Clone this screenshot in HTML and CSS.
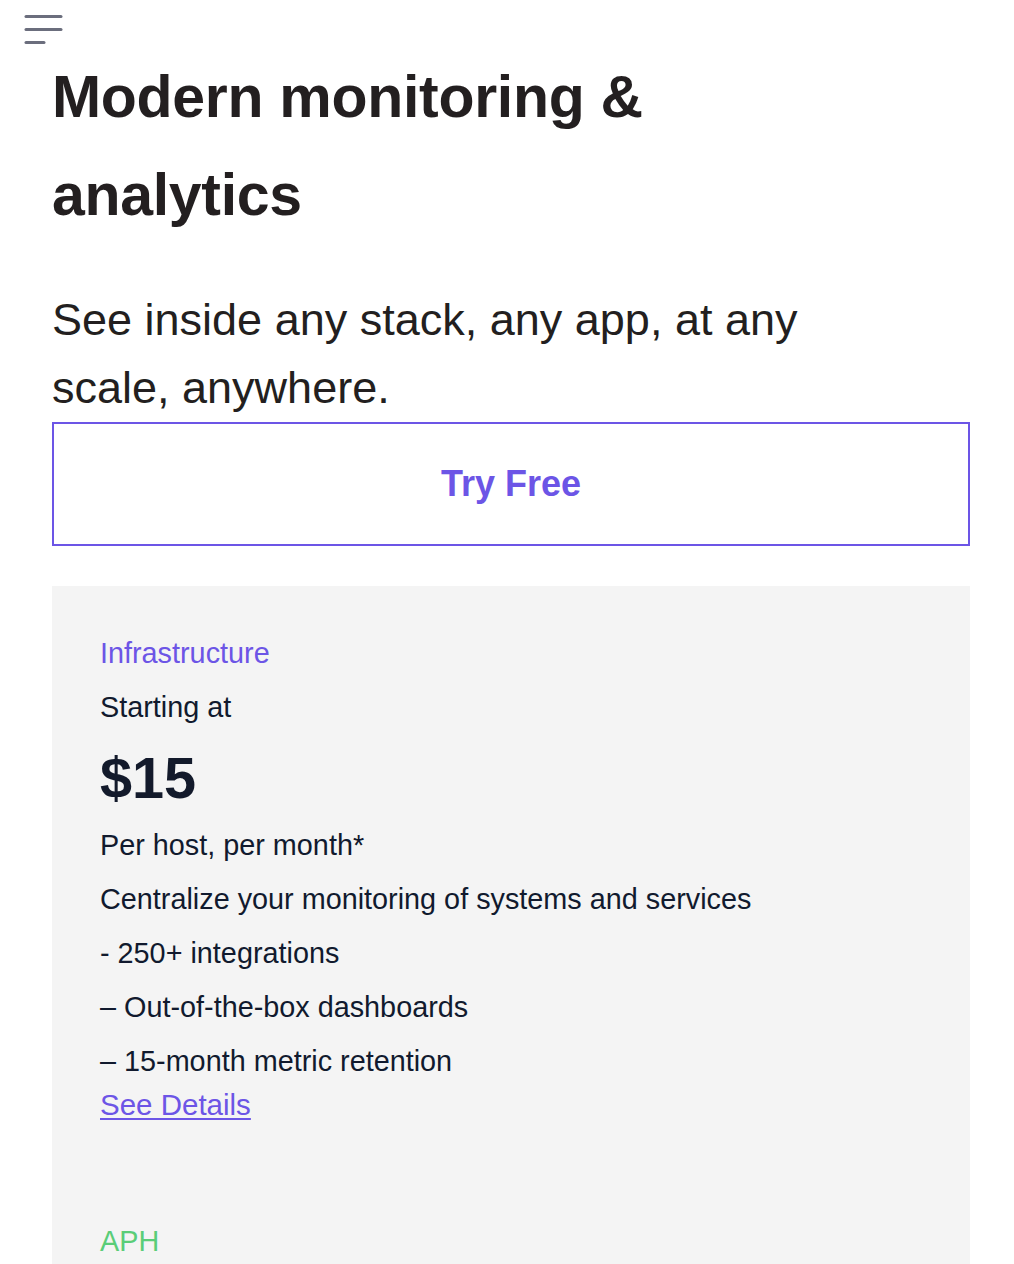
FILE: index.html
```html
<!DOCTYPE html>
<html lang="en">
<head>
<meta charset="utf-8">
<title>Modern monitoring &amp; analytics</title>
<link rel="stylesheet" href="styles.css">
</head>
<body>
<header class="topbar">
  <button class="menu" aria-label="Menu">
    <svg width="40" height="32" viewBox="0 0 40 32" aria-hidden="true">
      <g stroke="#6b6e7d" stroke-width="3" stroke-linecap="round" fill="none">
        <line x1="2" y1="2.5" x2="37" y2="2.5"/>
        <line x1="2" y1="15.5" x2="37" y2="15.5"/>
        <line x1="2" y1="28.5" x2="20" y2="28.5"/>
      </g>
    </svg>
  </button>
</header>
<main class="page">
  <h1 class="title">Modern monitoring &amp; analytics</h1>
  <p class="subtitle">See inside any stack, any app, at any scale, anywhere.</p>
  <a class="cta" href="#">Try Free</a>
  <section class="plans">
    <div class="plan">
      <p class="plan-name infra">Infrastructure</p>
      <p class="line">Starting at</p>
      <p class="price">$15</p>
      <p class="line">Per host, per month*</p>
      <p class="line">Centralize your monitoring of systems and services</p>
      <p class="line">- 250+ integrations</p>
      <p class="line">– Out-of-the-box dashboards</p>
      <p class="line last">– 15-month metric retention</p>
      <a class="details" href="#">See Details</a>
    </div>
    <div class="plan">
      <p class="plan-name apm">APH</p>
    </div>
  </section>
</main>
</body>
</html>
```
FILE: styles.css
```css
html, body {
  margin: 0;
  padding: 0;
  background: #ffffff;
}
body {
  font-family: "Liberation Sans", Arial, Helvetica, sans-serif;
  color: #231f20;
}
.topbar {
  height: 48px;
  box-sizing: border-box;
  padding: 14px 0 0 24px;
}
.menu {
  display: block;
  padding: 0;
  margin: 0;
  border: 0;
  background: none;
  width: 40px;
  height: 32px;
}
.menu svg {
  display: block;
}
.page {
  margin: 0 44px 0 52px;
}
.title {
  margin: 0;
  max-width: 800px;
  font-size: 59px;
  line-height: 98px;
  font-weight: 700;
  letter-spacing: -0.3px;
  color: #231f20;
}
.subtitle {
  margin: 42px 0 0 0;
  max-width: 800px;
  font-size: 45px;
  line-height: 67.5px;
  color: #231f20;
}
.cta {
  display: flex;
  align-items: center;
  justify-content: center;
  box-sizing: border-box;
  margin-top: 1px;
  height: 124px;
  border: 2px solid #6c55e6;
  color: #6c55e6;
  font-size: 36px;
  font-weight: 700;
  text-decoration: none;
}
.plans {
  margin-top: 40px;
  background: #f4f4f4;
  padding: 45.5px 48px 60px 48px;
  display: flex;
  flex-direction: column;
  gap: 92.5px;
}
.plan {
  display: flex;
  flex-direction: column;
  align-items: flex-start;
  color: #111a2e;
  font-size: 28.8px;
  line-height: 43.2px;
}
.plan p {
  margin: 0 0 10.8px 0;
}
.plan p.last {
  margin-bottom: 0;
}
.plan-name.infra {
  color: #6c55e6;
}
.plan-name.apm {
  color: #5acd78;
}
.plan p.price {
  font-size: 57.6px;
  line-height: 77px;
  font-weight: 700;
  margin-bottom: 7.7px;
  color: #131a2b;
}
.details {
  color: #6c55e6;
  font-size: 29.5px;
  line-height: 44px;
  text-decoration: underline;
  text-underline-offset: 3px;
}
```
